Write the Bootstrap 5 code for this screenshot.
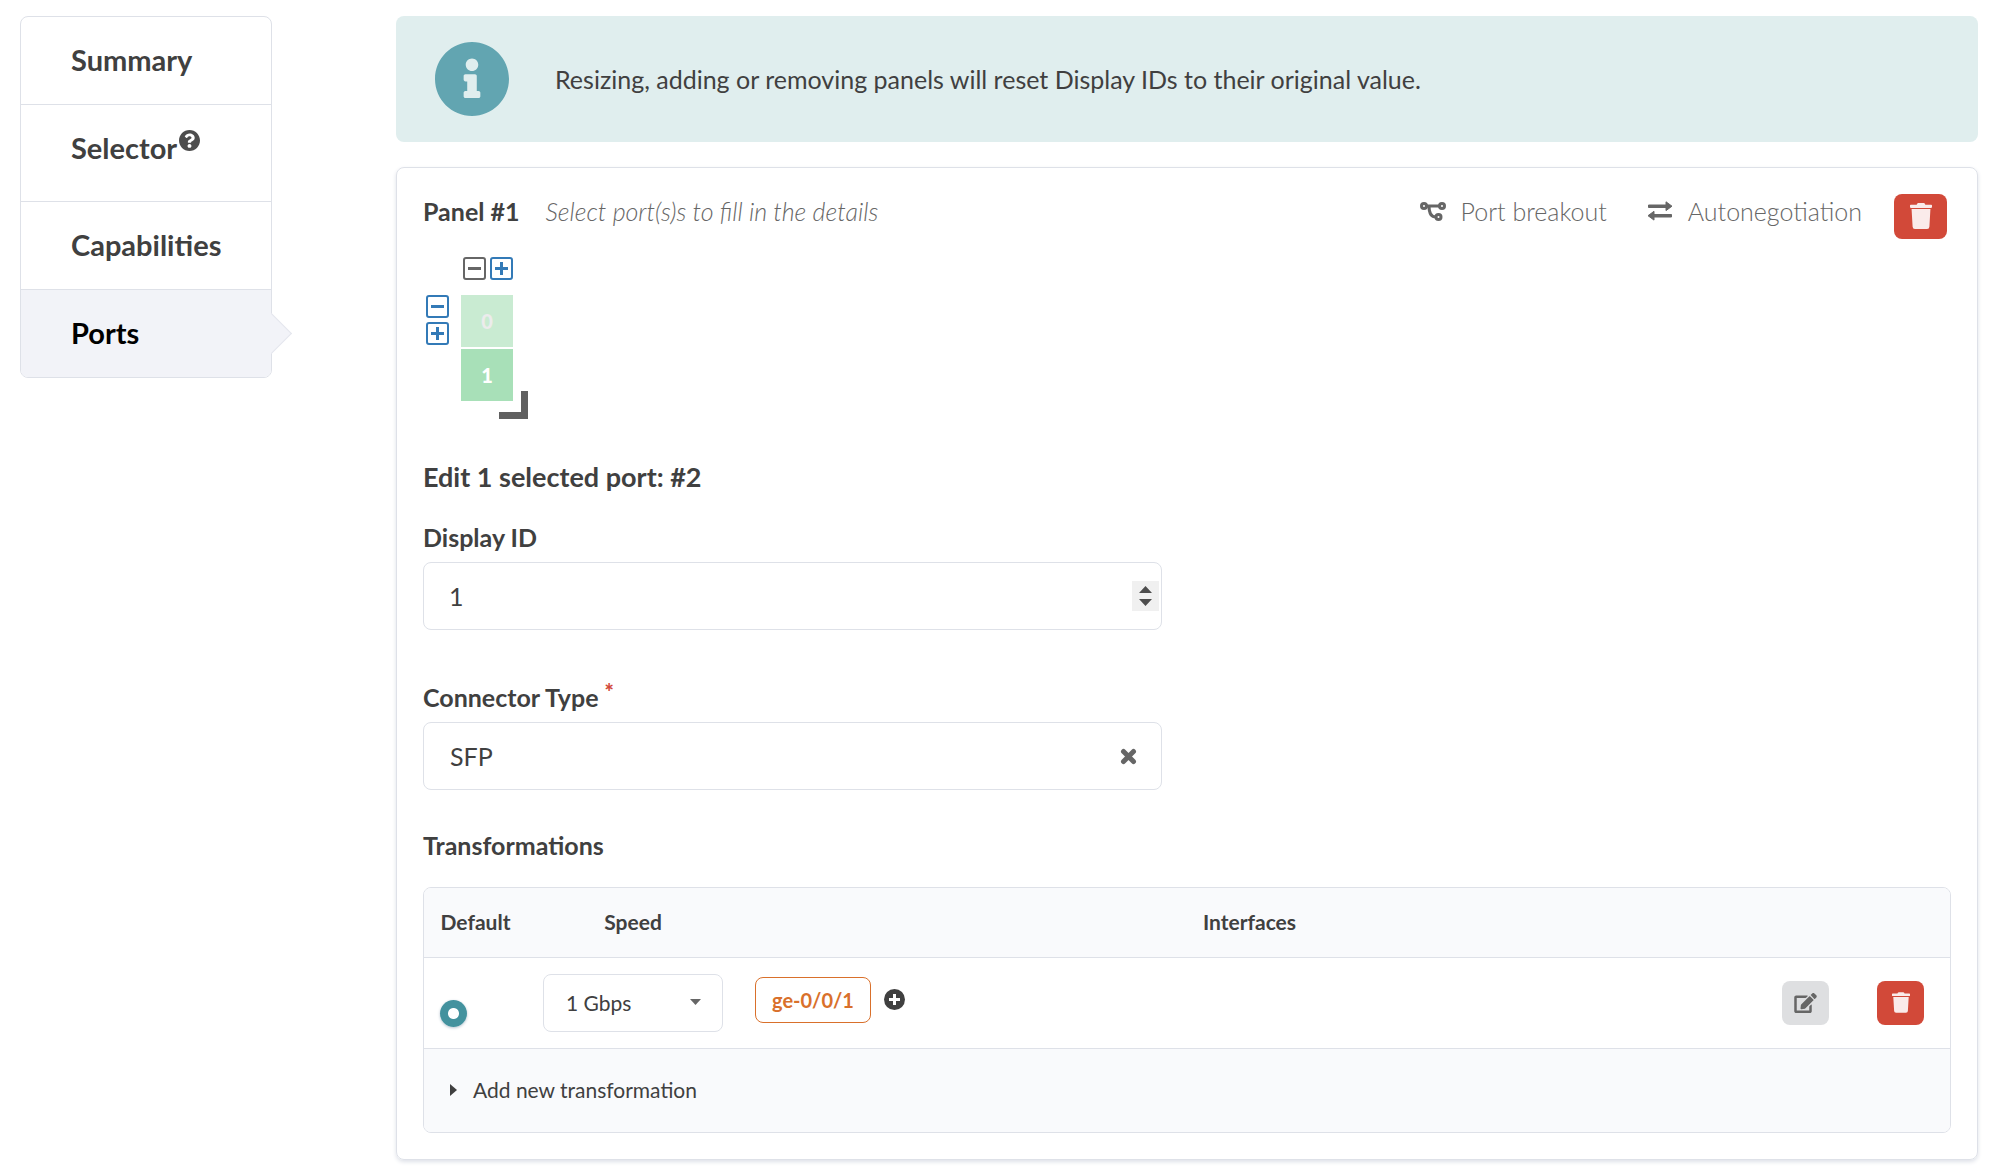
<!DOCTYPE html>
<html lang="en">
<head>
<meta charset="utf-8">
<meta name="viewport" content="width=device-width, initial-scale=1">
<title>Ports</title>
<link href="https://cdn.jsdelivr.net/npm/bootstrap@5.3.0/dist/css/bootstrap.min.css" rel="stylesheet">
<style>
:root { --line: #dee1e8; --ink: #404040; --soft: #666; --red: #d24939; --blue: #337ab7; }
body { font-family: Lato, "Liberation Sans", sans-serif; color: var(--ink); font-size: 25px; line-height: 36px; background: #fff; }
svg { display: block; flex: none; }
.page { padding: 16px 38px 13px 20px; gap: 124px; }

.side-nav { width: 252px; flex: none; border: 1px solid var(--line); border-radius: 8px; }
.side-nav .nav-link { color: var(--ink); font-size: 29px; font-weight: 700; line-height: 38px; padding: 24px 50px 25px; position: relative; }
.side-nav .nav-link + .nav-link { border-top: 1px solid var(--line); }
.side-nav .with-help { padding-bottom: 34px; }
.side-nav .help { position: absolute; left: 158px; top: 25px; }
.side-nav .nav-link.active { color: #000; background: #f2f3f8; border-radius: 0 0 7px 7px; }
.side-nav .nav-link.active::after { content: ""; position: absolute; right: -15px; top: 50%; width: 29px; height: 29px; margin-top: -15px; transform: rotate(45deg); background: #f2f3f8; border: solid #e4e6ed; border-width: 1px 1px 0 0; }

.notice { background: #e0eeee; border-radius: 8px; padding: 26px 39px; gap: 46px; margin-bottom: 25px; border: 0; color: var(--ink); }
.panel-card { border: 1px solid var(--line); border-radius: 8px; padding: 26px; box-shadow: 0 2px 4px #dee1e8; }
.title-sm { font-size: 25px; font-weight: 700; line-height: 36px; margin: 0; }
.title-md { font-size: 27px; font-weight: 700; line-height: 36px; margin: 0; }
.edit-title { margin: 40px 0 24px; }
.t-title { margin: 37px 0 24px; }
.hint { font-style: italic; font-weight: 300; color: var(--soft); margin-left: 26px; }
.panel-head { height: 45px; }
.panel-head .title-sm, .panel-head .hint, .head-item { line-height: 34px; }
.head-item { font-weight: 300; color: var(--soft); gap: 15px; }
.head-actions { gap: 40px; margin-right: 32px; }
.btn-trash { background: var(--red); border: 0; border-radius: 8px; width: 53px; height: 45px; padding: 0 0 2px; }
.btn-sq { border: 0; border-radius: 8px; width: 47px; height: 44px; padding: 0; }
.btn-sq.gray { background: #dedfe1; }
.btn-sq.red { background: var(--red); }
.icon-btn { border: 0; background: none; padding: 0; color: var(--blue); }
.icon-btn:disabled { color: var(--soft); }

.port-grid { display: grid; grid-template-columns: 23px 52px; column-gap: 12px; row-gap: 15px; width: max-content; padding: 18px 15px 18px 3px; position: relative; }
.port-stack { gap: 2px; }
.port { width: 52px; height: 52px; border: 0; padding: 0; background: #a8e0b8; color: #fff; font-size: 20px; font-weight: 900; line-height: 52px; }
.port.dim { background: #c9ebd2; color: #ececec; }
.resizer { position: absolute; right: 0; bottom: 0; width: 29px; height: 28px; border: solid #606060; border-width: 0 7px 7px 0; cursor: nwse-resize; }

.field { width: 739px; max-width: 100%; }
.field label { margin-bottom: 7px; }
.field + .field { margin-top: 49px; }
.field .form-control, .field .form-select { height: 68px; border: 1px solid var(--line); border-radius: 8px; font-size: 25px; line-height: 36px; color: var(--ink); padding: 15px 26px; background-image: none; }
.field .form-control { padding: 15px 2px 15px 25px; }
.field input::-webkit-inner-spin-button { -webkit-appearance: none; opacity: 1; width: 27px; height: 30px; background: #f0f0f0 url("data:image/svg+xml,%3Csvg xmlns='http://www.w3.org/2000/svg' viewBox='0 0 27 30'%3E%3Cpath fill='%234d4d4d' d='M7 12l6.500-7 6.500 7zM7 18l6.500 7 6.500-7z'/%3E%3C/svg%3E"); }
.clear { position: absolute; right: 25px; top: 26px; }
.req { color: var(--red); font-size: 22px; font-weight: 900; position: relative; top: -7px; line-height: 1; margin-left: 6px; }

.grid-box { border: 1px solid var(--line); border-radius: 8px; overflow: hidden; }
.t-table { margin: 0; color: var(--ink); font-size: 21px; line-height: 30px; table-layout: fixed; --bs-table-color: #404040; }
.t-table > :not(caption) > * > * { padding: 0; border-bottom: 1px solid var(--line); vertical-align: middle; color: var(--ink); }
.t-table th { font-weight: 700; height: 69px; text-align: center; background: #f9fafc !important; }
.t-table tbody td { height: 91px; }
.t-table tfoot td { height: 84px; background: #f9fafc !important; border-bottom: 0 !important; }
.t-table .form-check-input { width: 27px; height: 27px; margin: 21px 0 0 16px; float: none; display: block; border: 0; background: radial-gradient(circle, #fff 5px, #43929e 6px); box-shadow: 0 1px 3px #b8c4d0; }
.t-table .form-select { width: 180px; height: 58px; font-size: 21px; line-height: 30px; border: 1px solid var(--line); border-radius: 8px; color: var(--ink); padding: 13px 22px; margin: 0 auto; background: #fff url("data:image/svg+xml,%3Csvg xmlns='http://www.w3.org/2000/svg' viewBox='0 0 11 7'%3E%3Cpath fill='%23666' d='M0 0h11L5.500 6z'/%3E%3C/svg%3E") no-repeat right 21px center / 11px 7px; }
.iface-row { gap: 13px; padding: 0 0 6px 16px; }
.iface { border: 1px solid #d9702b; color: #d9702b; border-radius: 8px; font-size: 20px; font-weight: 700; line-height: 28px; padding: 8px 16px; background: #fff; }
.add-new { color: var(--ink); gap: 16px; padding: 0 26px; border: 0; background: none; }
</style>
</head>
<body>
<div class="page d-flex align-items-start">
  <nav class="side-nav nav flex-column" aria-label="Sections">
    <a class="nav-link" href="#summary">Summary</a>
    <a class="nav-link with-help" href="#selector">Selector<svg class="help" width="21" height="21" viewBox="8 8 496 496" fill="#4d4d4d"><path d="M504 256c0 136.997-111.043 248-248 248S8 392.997 8 256C8 119.083 119.043 8 256 8s248 111.083 248 248zM262.655 90c-54.497 0-89.255 22.957-116.549 63.758-3.536 5.286-2.353 12.415 2.715 16.258l34.699 26.310c5.205 3.947 12.621 3.008 16.665-2.122 17.864-22.658 30.113-35.797 57.303-35.797 20.429 0 45.698 13.148 45.698 32.958 0 14.976-12.363 22.667-32.534 33.976C247.128 238.528 216 254.941 216 296v4c0 6.627 5.373 12 12 12h56c6.627 0 12-5.373 12-12v-1.333c0-28.462 83.186-29.647 83.186-106.667 0-58.002-60.165-102-116.531-102zM256 338c-25.365 0-46 20.635-46 46 0 25.364 20.635 46 46 46s46-20.636 46-46c0-25.365-20.635-46-46-46z"/></svg></a>
    <a class="nav-link" href="#capabilities">Capabilities</a>
    <a class="nav-link active" href="#ports" aria-current="page">Ports</a>
  </nav>

  <main class="flex-grow-1">
    <div class="notice alert d-flex align-items-center" role="alert">
      <svg width="74" height="74" viewBox="8 8 496 496" fill="#62a5b1"><path d="M256 8C119.043 8 8 119.083 8 256c0 136.997 111.043 248 248 248s248-111.003 248-248C504 119.083 392.957 8 256 8zm0 110c23.196 0 42 18.804 42 42s-18.804 42-42 42-42-18.804-42-42 18.804-42 42-42zm56 254c0 6.627-5.373 12-12 12h-88c-6.627 0-12-5.373-12-12v-24c0-6.627 5.373-12 12-12h12v-64h-12c-6.627 0-12-5.373-12-12v-24c0-6.627 5.373-12 12-12h64c6.627 0 12 5.373 12 12v100h12c6.627 0 12 5.373 12 12v24z"/></svg>
      <span>Resizing, adding or removing panels will reset Display IDs to their original value.</span>
    </div>

    <section class="panel-card">
      <header class="panel-head d-flex align-items-start">
        <h2 class="title-sm">Panel #1</h2>
        <span class="hint">Select port(s)s to fill in the details</span>
        <div class="d-flex ms-auto align-items-start pe-1">
          <div class="head-actions d-flex">
            <span class="head-item d-flex align-items-center"><svg width="26" height="20" viewBox="0 0 26 20" fill="none" stroke="#666" stroke-width="3"><circle cx="4" cy="5" r="2.500"/><circle cx="22" cy="5" r="2.500"/><circle cx="18.500" cy="16" r="2.500"/><path d="M6 5h13M9 5c0 7 2 11 7 11"/></svg>Port breakout</span>
            <span class="head-item d-flex align-items-center"><svg width="26" height="20" viewBox="0 0 26 20" fill="#666" stroke="#666" stroke-linejoin="round"><path d="M1.500 4H19V.8L25 5.200l-6 4.400V6.500H1.500zM24.500 13.500H7v-3.200L1 14.700l6 4.400V16h17.500z"/></svg>Autonegotiation</span>
          </div>
          <button class="btn btn-trash d-flex align-items-center justify-content-center" type="button" aria-label="Delete panel"><svg width="22" height="26" viewBox="0 0 448 512" preserveAspectRatio="none" fill="#faebea"><path d="M53 467a48 48 0 0 0 48 45h246a48 48 0 0 0 48-45L416 120H32zM432 32H312l-9-19A24 24 0 0 0 281 0H167a24 24 0 0 0-21 13l-10 19H16A16 16 0 0 0 0 48v32a16 16 0 0 0 16 16h416a16 16 0 0 0 16-16V48a16 16 0 0 0-16-16z"/></svg></button>
        </div>
      </header>

      <div class="port-grid">
        <span></span>
        <div class="d-flex justify-content-end gap-1">
          <button class="icon-btn" type="button" disabled aria-label="Remove column"><svg width="23" height="23" viewBox="0 0 23 23" fill="none" stroke="currentColor" stroke-width="2"><rect x="1" y="1" width="21" height="21" rx="2"/><path d="M5 11.500h13" stroke-width="3"/></svg></button>
          <button class="icon-btn" type="button" aria-label="Add column"><svg width="23" height="23" viewBox="0 0 23 23" fill="none" stroke="currentColor" stroke-width="2"><rect x="1" y="1" width="21" height="21" rx="2"/><path d="M5 11.500h13M11.500 5v13" stroke-width="3"/></svg></button>
        </div>
        <div class="d-flex flex-column gap-1">
          <button class="icon-btn" type="button" aria-label="Remove row"><svg width="23" height="23" viewBox="0 0 23 23" fill="none" stroke="currentColor" stroke-width="2"><rect x="1" y="1" width="21" height="21" rx="2"/><path d="M5 11.500h13" stroke-width="3"/></svg></button>
          <button class="icon-btn" type="button" aria-label="Add row"><svg width="23" height="23" viewBox="0 0 23 23" fill="none" stroke="currentColor" stroke-width="2"><rect x="1" y="1" width="21" height="21" rx="2"/><path d="M5 11.500h13M11.500 5v13" stroke-width="3"/></svg></button>
        </div>
        <div class="port-stack d-grid">
          <button class="port dim" type="button">0</button>
          <button class="port" type="button">1</button>
        </div>
        <span class="resizer"></span>
      </div>

      <h3 class="title-md edit-title">Edit 1 selected port: #2</h3>

      <div class="field">
        <label class="title-sm d-block" for="displayId">Display ID</label>
        <input class="form-control" id="displayId" type="number" value="1">
      </div>

      <div class="field">
        <label class="title-sm d-block" for="connector">Connector Type<span class="req">*</span></label>
        <div class="position-relative">
          <select class="form-select" id="connector"><option>SFP</option></select>
          <button class="icon-btn clear" type="button" aria-label="Clear"><svg width="17" height="17" viewBox="0 0 17 17" stroke="#666" stroke-width="5" stroke-linecap="round"><path d="M3.500 3.500l10 10M13.500 3.500l-10 10"/></svg></button>
        </div>
      </div>

      <h3 class="title-sm t-title">Transformations</h3>
      <div class="grid-box">
        <table class="table t-table">
          <colgroup><col style="width:103px"><col style="width:212px"><col><col style="width:91px"><col style="width:99px"></colgroup>
          <thead><tr><th scope="col">Default</th><th scope="col">Speed</th><th scope="col">Interfaces</th><th></th><th></th></tr></thead>
          <tbody><tr>
            <td><input class="form-check-input" type="radio" name="default" checked aria-label="Default transformation"></td>
            <td><select class="form-select" aria-label="Speed"><option>1 Gbps</option></select></td>
            <td><div class="d-flex align-items-center iface-row"><button class="iface" type="button">ge-0/0/1</button>
              <button class="icon-btn" type="button" aria-label="Add interface"><svg width="21" height="21" viewBox="0 0 21 21"><circle cx="10.500" cy="10.500" r="10.500" fill="#404040"/><path d="M5 10.500h11M10.500 5v11" stroke="#fff" stroke-width="3"/></svg></button></div></td>
            <td><button class="btn btn-sq gray d-flex align-items-center justify-content-center mx-auto" type="button" aria-label="Edit"><svg width="23" height="20" viewBox="0 0 576 512" fill="#666"><path d="M402.600 83.200l90.200 90.200c3.800 3.800 3.800 10 0 13.800L274.400 405.600l-92.800 10.300c-12.400 1.400-22.900-9.100-21.500-21.500l10.300-92.800L388.800 83.200c3.800-3.800 10-3.800 13.800 0zm162-22.900l-48.800-48.800c-15.200-15.200-39.900-15.200-55.200 0l-35.400 35.400c-3.800 3.800-3.800 10 0 13.800l90.200 90.200c3.800 3.800 10 3.800 13.800 0l35.400-35.400c15.200-15.300 15.200-40 0-55.200zM384 346.200V448H64V128h229.800c3.200 0 6.200-1.300 8.500-3.500l40-40c7.600-7.600 2.200-20.500-8.500-20.500H48C21.500 64 0 85.500 0 112v352c0 26.500 21.500 48 48 48h352c26.500 0 48-21.500 48-48V306.200c0-10.700-12.900-16-20.500-8.500l-40 40c-2.200 2.300-3.500 5.300-3.500 8.500z"/></svg></button></td>
            <td><button class="btn btn-sq red d-flex align-items-center justify-content-center mx-auto" type="button" aria-label="Delete"><svg width="18" height="21" viewBox="0 0 448 512" fill="#faebea"><path d="M53 467a48 48 0 0 0 48 45h246a48 48 0 0 0 48-45L416 120H32zM432 32H312l-9-19A24 24 0 0 0 281 0H167a24 24 0 0 0-21 13l-10 19H16A16 16 0 0 0 0 48v32a16 16 0 0 0 16 16h416a16 16 0 0 0 16-16V48a16 16 0 0 0-16-16z"/></svg></button></td>
          </tr></tbody>
          <tfoot><tr><td colspan="5"><button class="add-new d-flex align-items-center" type="button"><svg width="7" height="12" viewBox="0 0 7 12" fill="#404040"><path d="M0 0l7 6-7 6z"/></svg>Add new transformation</button></td></tr></tfoot>
        </table>
      </div>
    </section>
  </main>
</div>
<script src="https://cdn.jsdelivr.net/npm/bootstrap@5.3.0/dist/js/bootstrap.bundle.min.js"></script>
</body>
</html>
